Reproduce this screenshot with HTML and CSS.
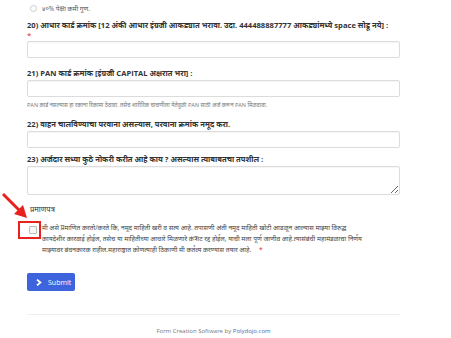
FILE: index.html
```html
<html>
<head>
<meta charset="utf-8">
<link rel="stylesheet" href="styles.css">
</head>
<body>
<form class="page">
	<div class="option">
		<span class="radio"></span>
		<span>४०% पेक्षा कमी गुण.</span>
	</div>

	<div class="field f20">
		<label class="qlabel">20) आधार कार्ड क्रमांक [12 अंकी आधार इंग्रजी आकड्यात भरावा. उदा. 444488887777 आकड्यांमध्ये space सोडू नये] :</label>
		<div class="req">*</div>
		<input type="text" class="box">
	</div>

	<div class="field f21">
		<label class="qlabel">21) PAN कार्ड क्रमांक [इंग्रजी CAPITAL अक्षरात भरा] :</label>
		<input type="text" class="box">
		<div class="help">PAN कार्ड नसल्यास हा रकाना रिकामा ठेवावा. तसेच शारीरिक चाचणीला येतेवुळी PAN साठी अर्ज करून PAN मिळवावा.</div>
	</div>

	<div class="field f22">
		<label class="qlabel">22) वाहन चालविण्याचा परवाना असल्यास, परवाना क्रमांक नमूद करा.</label>
		<input type="text" class="box">
	</div>

	<div class="field f23">
		<label class="qlabel">23) अर्जदार सध्या कुठे नोकरी करीत आहे काय ? असल्यास त्याबाबतचा तपशील :</label>
		<textarea class="box area"></textarea>
	</div>

	<div class="cert">
		<div class="cert-title">प्रमाणपत्र</div>
		<div class="cert-row">
			<span class="check-wrap"><span class="check"></span></span>
			<span class="cert-text">मी असे प्रमाणित करतो/करते कि, नमूद माहिती खरी व सत्य आहे. तपासणी अंती नमूद माहिती खोटी आढळून आल्यास माझ्या विरुद्ध<br>कायदेशीर कारवाई होईल, तसेच या माहितीच्या आधारे मिळणारे कंत्राट रद्द होईल, याची मला पूर्ण जाणीव आहे.त्यासंबंधी महामंडळाचा निर्णय<br>माझ्यावर बंधनकारक राहील.महाराष्ट्रात कोणत्याही ठिकाणी मी कर्तव्य करण्यास तयार आहे. <span class="req-inline">*</span></span>
		</div>
		<svg class="arrow" width="30" height="30" viewBox="0 0 30 30">
			<line x1="2" y1="2" x2="19" y2="19" stroke="#e8201e" stroke-width="3"/>
			<polygon points="26,26 13,22 22,13" fill="#e8201e"/>
		</svg>
	</div>

	<button type="button" class="submit">
		<svg width="6" height="7" viewBox="0 0 6 7"><path d="M1 0.6 L4.4 3.5 L1 6.4" fill="none" stroke="#fff" stroke-width="1.8"/></svg>
		<span>Submit</span>
	</button>

	<hr class="rule">
	<div class="footer">Form Creation Software by <a class="brand">Polydojo.com</a></div>
</form>
</body>
</html>
```

FILE: styles.css
```css
body {
	margin: 0;
	background: #fff;
	font-family: "Open Sans", "Noto Sans", sans-serif;
	color: #333;
}

.page {
	width: 373px;
	margin: 0 0 0 27px;
	padding-top: 3px;
	position: relative;
}

.option {
	display: flex;
	align-items: center;
	gap: 5px;
	height: 10px;
	padding-left: 3px;
	font-size: 6.5px;
	color: #555;
}
.radio {
	width: 5px;
	height: 5px;
	border: 1px solid #ccc;
	border-radius: 50%;
}

.field {
	display: flex;
	flex-direction: column;
}
.qlabel {
	font-size: 7.6px;
	font-weight: bold;
	color: #333;
	line-height: 10px;
	white-space: nowrap;
}
.req {
	color: #e0242a;
	font-size: 8px;
	line-height: 9px;
	height: 9px;
}
.box {
	display: block;
	width: 373px;
	height: 17px;
	margin: 2px 0 0 0;
	border: 1px solid #dcdcdc;
	border-radius: 2px;
	box-shadow: inset 0 1px 1px rgba(0,0,0,0.04);
	background: #fff;
	padding: 0;
}
.area {
	height: 29px;
	resize: vertical;
}
.help {
	font-size: 5.6px;
	color: #777;
	margin-top: 4px;
	line-height: 8px;
	white-space: nowrap;
}

.f20 { margin-top: 7px; }
.f21 { margin-top: 10px; }
.f22 { margin-top: 10px; }
.f23 { margin-top: 6px; }

.cert {
	position: relative;
	margin-top: 9px;
}
.cert-title {
	font-size: 7.6px;
	line-height: 10px;
	padding-left: 3px;
	color: #333;
}
.cert-row {
	display: flex;
	align-items: flex-start;
	margin-top: 10px;
}
.check-wrap {
	flex: none;
	width: 19px;
	height: 14px;
	margin-left: -9px;
	margin-top: -3px;
	border: 2px solid #e8201e;
	display: flex;
	align-items: center;
	justify-content: center;
}
.check {
	width: 6px;
	height: 6px;
	margin-left: 6px;
	border: 1px solid #bbb;
	border-radius: 1px;
	background: #f6f6f6;
}
.cert-text {
	white-space: nowrap;
	font-size: 6.6px;
	line-height: 11px;
	color: #444;
	margin-left: 1px;
	margin-top: -2px;
}
.req-inline {
	color: #e0242a;
	margin-left: 6px;
}
.arrow {
	position: absolute;
	left: -26px;
	top: -12px;
}

.submit {
	display: flex;
	align-items: center;
	gap: 6px;
	margin-top: 18px;
	width: 48px;
	height: 18px;
	padding: 0 0 0 9px;
	border: none;
	border-radius: 2px;
	background: #3d63dd;
	color: #fff;
	font-family: "Open Sans", sans-serif;
	font-size: 7px;
}

.rule {
	margin: 23px 0 0 0;
	border: none;
	border-top: 1px solid #eee;
}
.footer {
	text-align: center;
	font-size: 6px;
	color: #777;
	margin-top: 12px;
}
.brand {
	color: #3b6fb6;
}
```
